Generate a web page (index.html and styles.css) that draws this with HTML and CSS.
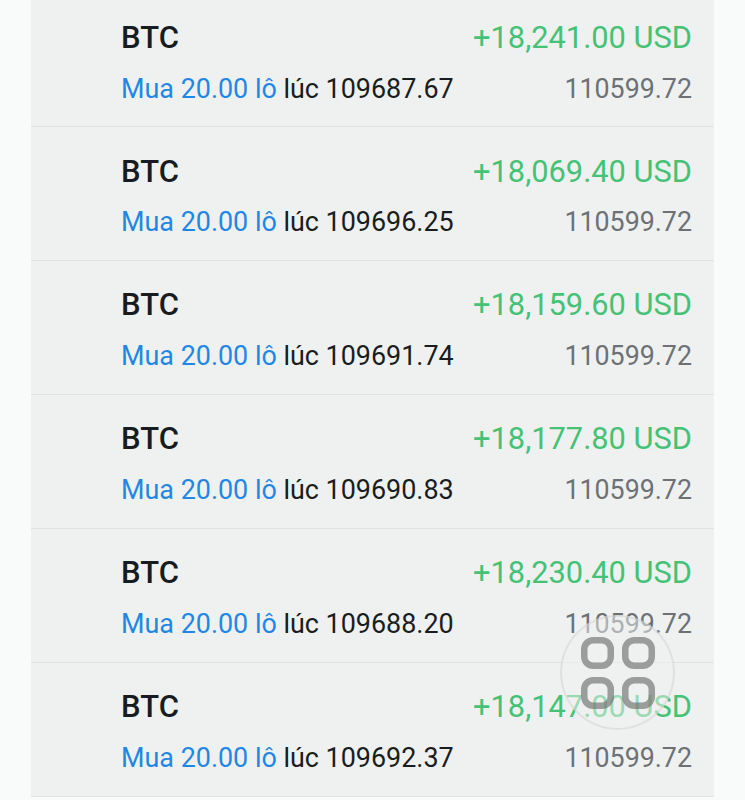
FILE: index.html
```html
<!DOCTYPE html>
<html lang="vi">
<head>
  <meta charset="UTF-8" />
  <meta name="viewport" content="width=device-width, initial-scale=1.0" />
  <title>Positions</title>
  <link rel="stylesheet" href="styles.css">
</head>
<body>

  <div class="list">
    <div class="row">
      <div class="line">
        <span class="symbol">BTC</span>
        <span class="profit">+18,241.00 USD</span>
      </div>
      <div class="line">
        <span class="info"><span class="buy">Mua 20.00 lô</span> lúc 109687.67</span>
        <span class="price">110599.72</span>
      </div>
    </div>
    <div class="row">
      <div class="line">
        <span class="symbol">BTC</span>
        <span class="profit">+18,069.40 USD</span>
      </div>
      <div class="line">
        <span class="info"><span class="buy">Mua 20.00 lô</span> lúc 109696.25</span>
        <span class="price">110599.72</span>
      </div>
    </div>
    <div class="row">
      <div class="line">
        <span class="symbol">BTC</span>
        <span class="profit">+18,159.60 USD</span>
      </div>
      <div class="line">
        <span class="info"><span class="buy">Mua 20.00 lô</span> lúc 109691.74</span>
        <span class="price">110599.72</span>
      </div>
    </div>
    <div class="row">
      <div class="line">
        <span class="symbol">BTC</span>
        <span class="profit">+18,177.80 USD</span>
      </div>
      <div class="line">
        <span class="info"><span class="buy">Mua 20.00 lô</span> lúc 109690.83</span>
        <span class="price">110599.72</span>
      </div>
    </div>
    <div class="row">
      <div class="line">
        <span class="symbol">BTC</span>
        <span class="profit">+18,230.40 USD</span>
      </div>
      <div class="line">
        <span class="info"><span class="buy">Mua 20.00 lô</span> lúc 109688.20</span>
        <span class="price">110599.72</span>
      </div>
    </div>
    <div class="row">
      <div class="line">
        <span class="symbol">BTC</span>
        <span class="profit">+18,147.00 USD</span>
      </div>
      <div class="line">
        <span class="info"><span class="buy">Mua 20.00 lô</span> lúc 109692.37</span>
        <span class="price">110599.72</span>
      </div>
    </div>
  </div>

  <!-- floating assistive button -->
  <div class="float-btn">
    <svg width="74" height="72" viewBox="0 0 74 72" fill="none" stroke="#6f6f6f" stroke-width="6.500">
      <rect x="3.250" y="3.250" width="26.500" height="25.500" rx="9" />
      <rect x="44.250" y="3.250" width="26.500" height="25.500" rx="9" />
      <rect x="3.250" y="43.250" width="26.500" height="25.500" rx="9" />
      <rect x="44.250" y="43.250" width="26.500" height="25.500" rx="9" />
    </svg>
  </div>

</body>
</html>
```

FILE: styles.css
```css
html, body {
  height: 100%;
}

body {
  margin: 0;
  background: #f9fafa;
  font-family: Roboto, sans-serif;
  overflow: hidden;
}

.list {
  width: 683px;
  margin: -6.800px 0 0 31px;
  background: #eff1f1;
}

.row {
  box-sizing: border-box;
  height: 133.900px;
  padding: 23px 22px 0 90px;
  border-bottom: 1px solid #e0e2e2;
}

.line {
  display: flex;
  justify-content: space-between;
  align-items: center;
  height: 42px;
  margin-bottom: 9.300px;
}

.symbol {
  font-size: 31px;
  font-weight: 500;
  color: #161c20;
}

.profit {
  font-size: 30.800px;
  color: #45c275;
}

.info {
  font-size: 26.920px;
  color: #1a1d20;
}

.buy {
  color: #1f88e5;
}

.price {
  font-size: 26.800px;
  color: #6d7175;
}

.float-btn {
  position: absolute;
  left: 560px;
  top: 615px;
  width: 115px;
  height: 115px;
  box-sizing: border-box;
  border: 2px solid rgba(200, 200, 200, 0.4);
  border-radius: 50%;
  background: rgba(240, 241, 241, 0.5);
  display: flex;
  align-items: center;
  justify-content: center;
}

.float-btn svg {
  opacity: 0.65;
}
```
